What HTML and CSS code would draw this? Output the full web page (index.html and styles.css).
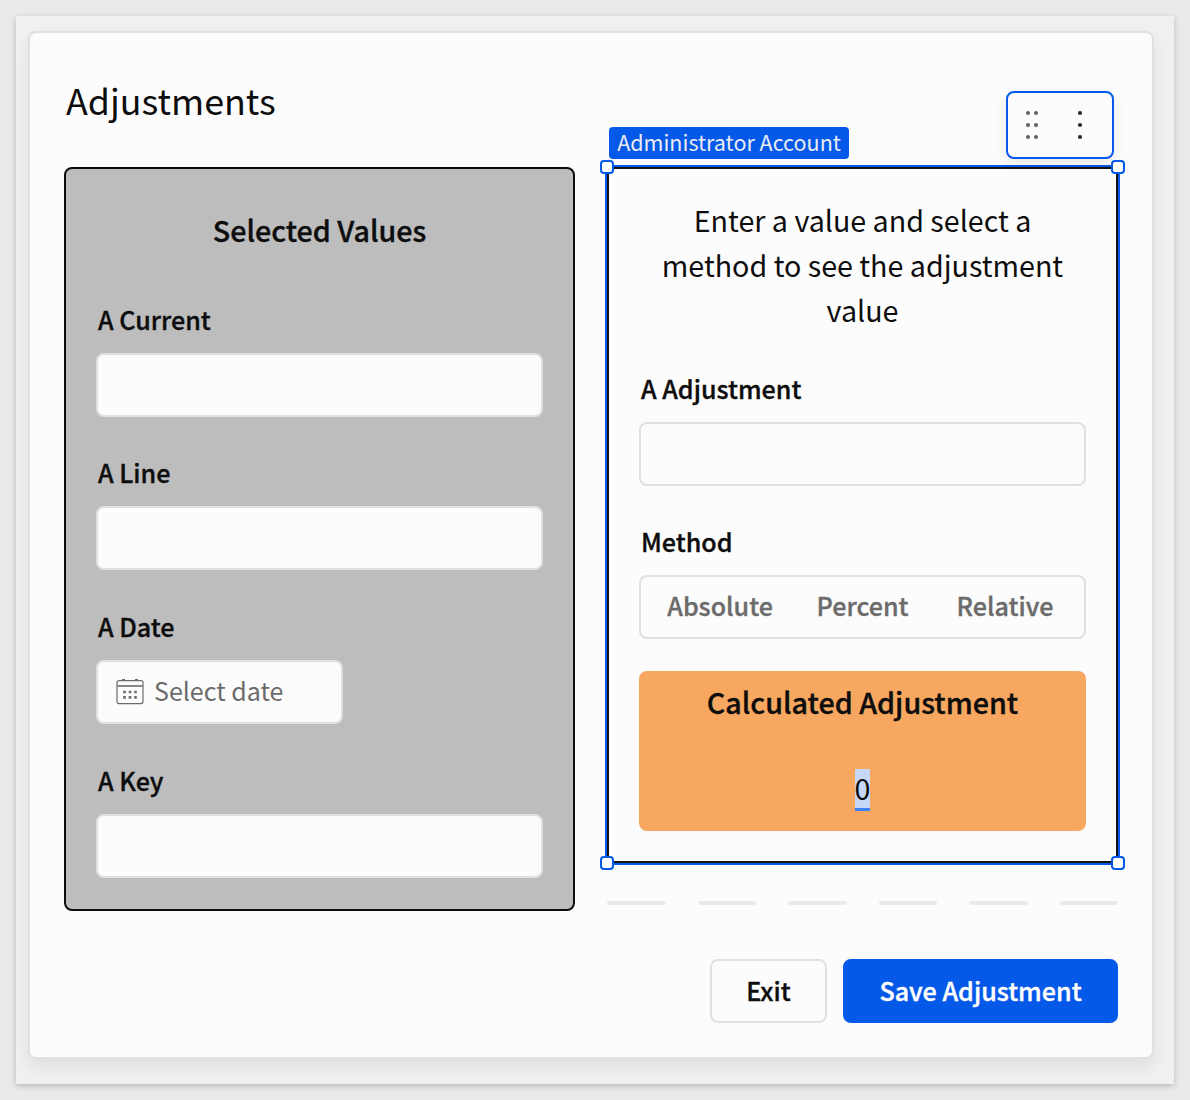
FILE: index.html
```html
<!DOCTYPE html>
<html lang="en">
<head>
<meta charset="utf-8">
<title>Adjustments</title>
<link rel="stylesheet" href="styles.css">
</head>
<body>
<main class="canvas">
  <section class="card">
    <header class="card-header">
      <h1 class="title">Adjustments</h1>
    </header>
    <div class="columns">
      <section class="panel panel-values">
        <h2 class="heading">Selected Values</h2>
        <div class="field">
          <label class="label">A Current</label>
          <div class="input"></div>
        </div>
        <div class="field">
          <label class="label">A Line</label>
          <div class="input"></div>
        </div>
        <div class="field">
          <label class="label">A Date</label>
          <div class="input input-date">
            <svg class="calendar" width="28" height="28" viewBox="0 0 28 28">
              <rect x="1" y="2.6" width="26" height="23" rx="2" fill="none" stroke="#6b6b6b" stroke-width="1.2"/>
              <path d="M1 8H27" stroke="#858585" stroke-width="2"/>
              <path d="M6 1.8H9M19 1.8H22" stroke="#6b6b6b" stroke-width="1.8"/>
              <path d="M7.2 14h2.6M12.7 14h2.6M18.2 14h2.6M7.2 19.4h2.6M12.7 19.4h2.6M18.2 19.4h2.6" stroke="#6b6b6b" stroke-width="2.6"/>
            </svg>
            <span class="placeholder">Select date</span>
          </div>
        </div>
        <div class="field">
          <label class="label">A Key</label>
          <div class="input"></div>
        </div>
      </section>

      <div class="side">
        <section class="panel panel-adjust">
          <p class="intro">Enter a value and select a method to see the adjustment value</p>
          <div class="field">
            <label class="label">A Adjustment</label>
            <div class="input"></div>
          </div>
          <div class="field">
            <label class="label">Method</label>
            <div class="segments">
              <span>Absolute</span><span>Percent</span><span>Relative</span>
            </div>
          </div>
          <div class="result">
            <h3 class="result-title">Calculated Adjustment</h3>
            <span class="result-value">0</span>
          </div>
          <span class="tag">Administrator Account</span>
          <div class="toolbar">
            <svg width="104" height="64" viewBox="0 0 104 64">
              <g fill="#666">
                <circle cx="20" cy="20" r="2.1"/><circle cx="28" cy="20" r="2.1"/>
                <circle cx="20" cy="32" r="2.1"/><circle cx="28" cy="32" r="2.1"/>
                <circle cx="20" cy="44" r="2.1"/><circle cx="28" cy="44" r="2.1"/>
              </g>
              <g fill="#2b2b2b">
                <circle cx="72" cy="20" r="2.1"/><circle cx="72" cy="32" r="2.1"/><circle cx="72" cy="44" r="2.1"/>
              </g>
            </svg>
          </div>
          <i class="handle top left"></i><i class="handle top right"></i>
          <i class="handle bottom left"></i><i class="handle bottom right"></i>
        </section>
        <div class="dashes"><i></i><i></i><i></i><i></i><i></i><i></i></div>
      </div>
    </div>
    <footer class="actions">
      <button class="btn btn-exit">Exit</button>
      <button class="btn btn-save">Save Adjustment</button>
    </footer>
  </section>
</main>
</body>
</html>
```

FILE: styles.css
```css
* { box-sizing: border-box; }

body {
  margin: 0;
  height: 1100px;
  padding: 16px;
  background: #eaeaea;
  color: #0d0d0d;
  font-family: "Noto Sans CJK JP", "Noto Sans", sans-serif;
  overflow: hidden;
}

h1, h2, h3, p { margin: 0; font-weight: 400; }

.canvas {
  width: 1158px;
  height: 1068px;
  padding: 15px 20px 25px 12px;
  background: #f0f0f0;
  box-shadow: 0 2px 6px rgba(0, 0, 0, .22);
  display: flex;
}

.card {
  flex: 1;
  display: flex;
  flex-direction: column;
  padding: 0 34px;
  background: #fcfcfc;
  border: 2px solid #e0e0e0;
  border-radius: 8px;
  box-shadow: 0 8px 16px rgba(0, 0, 0, .07);
}

.card-header { height: 134px; padding: 36px 0 0 2px; }
.title { font-size: 35.8px; line-height: 60px; }

.columns { display: flex; gap: 32px; height: 744px; }

.panel {
  width: 511px;
  padding: 0 30px;
  border: 2px solid #0d0d0d;
}

.panel-values {
  height: 744px;
  background: #bdbdbd;
  border-radius: 8px;
}

/* semi-bold: medium weight thickened by a hairline stroke */
.heading, .label, .segments, .result-title, .btn {
  font-weight: 500;
  -webkit-text-stroke: .35px currentColor;
}

.heading {
  height: 137px;
  padding-top: 38px;
  font-size: 28.65px;
  line-height: 45px;
  text-align: center;
}

.field { display: flex; flex-direction: column; }
.panel-values .field:nth-of-type(1) { height: 153px; }
.panel-values .field:nth-of-type(n+2) { height: 154px; }
.label {
  height: 47px;
  padding-left: 2px;
  font-size: 25.1px;
  line-height: 26px;
}

.input {
  height: 64px;
  background: #fcfcfc;
  border: 2px solid #e0e0e0;
  border-radius: 8px;
}

.input-date {
  width: 247px;
  display: flex;
  align-items: center;
  gap: 10px;
  padding-left: 18px;
}
.placeholder { height: 60px; font-size: 25px; line-height: 56px; color: #6b6b6b; }

.side { width: 511px; }

.panel-adjust {
  position: relative;
  height: 696px;
  border-color: #141414;
  box-shadow: 0 0 0 2px #0559e8;
}

.intro {
  height: 206px;
  padding-top: 28px;
  font-size: 28.65px;
  line-height: 45px;
  text-align: center;
}
.panel-adjust .field { height: 153px; }

.segments {
  height: 64px;
  display: grid;
  grid-template-columns: 149.3px 140px auto;
  padding: 0 0 0 26.3px;
  border: 2px solid #e0e0e0;
  border-radius: 8px;
  color: #6b6b6b;
  font-size: 25.1px;
  line-height: 56px;
}

.result {
  height: 160px;
  margin-top: -10px;
  padding-top: 8px;
  display: flex;
  flex-direction: column;
  align-items: center;
  background: #f7a760;
  border-radius: 8px;
}
.result-title { height: 90px; font-size: 28.7px; line-height: 45px; }
.result-value {
  height: 42px;
  font-size: 28.6px;
  line-height: 37px;
  background: #c7d7f8;
  border-bottom: 3px solid #3c7ff0;
}

.tag {
  position: absolute;
  left: 0;
  top: -42px;
  width: 240px;
  height: 32px;
  border-radius: 4px;
  background: #0559e8;
  color: #ebebf2;
  font-size: 21.5px;
  line-height: 30px;
  text-align: center;
  white-space: nowrap;
}

.toolbar {
  position: absolute;
  left: 397px;
  top: -78px;
  width: 108px;
  height: 68px;
  background: #fcfcfc;
  border: 2px solid #0559e8;
  border-radius: 8px;
  box-shadow: 0 4px 14px rgba(0, 0, 0, .08);
}
.toolbar svg { display: block; }

.handle {
  position: absolute;
  width: 14px;
  height: 14px;
  background: #fff;
  border: 2px solid #0559e8;
  border-radius: 4px;
}
.top { top: -9px; }
.bottom { bottom: -9px; }
.left { left: -9px; }
.right { right: -9px; }

.dashes { display: flex; gap: 32px; padding-top: 38px; }
.dashes i { flex: 1; height: 4px; border-radius: 2px; background: #eaeaea; }

.actions { display: flex; justify-content: flex-end; gap: 16px; padding-top: 48px; }
.btn {
  height: 64px;
  padding: 0 0 2px;
  font-family: inherit;
  font-size: 25.1px;
  line-height: 56px;
  border-radius: 8px;
}
.btn-exit { width: 117px; background: #fcfcfc; border: 2px solid #e0e0e0; color: #0d0d0d; }
.btn-save { width: 275px; background: #0559e8; border: 2px solid #0559e8; color: #fff; }
```
